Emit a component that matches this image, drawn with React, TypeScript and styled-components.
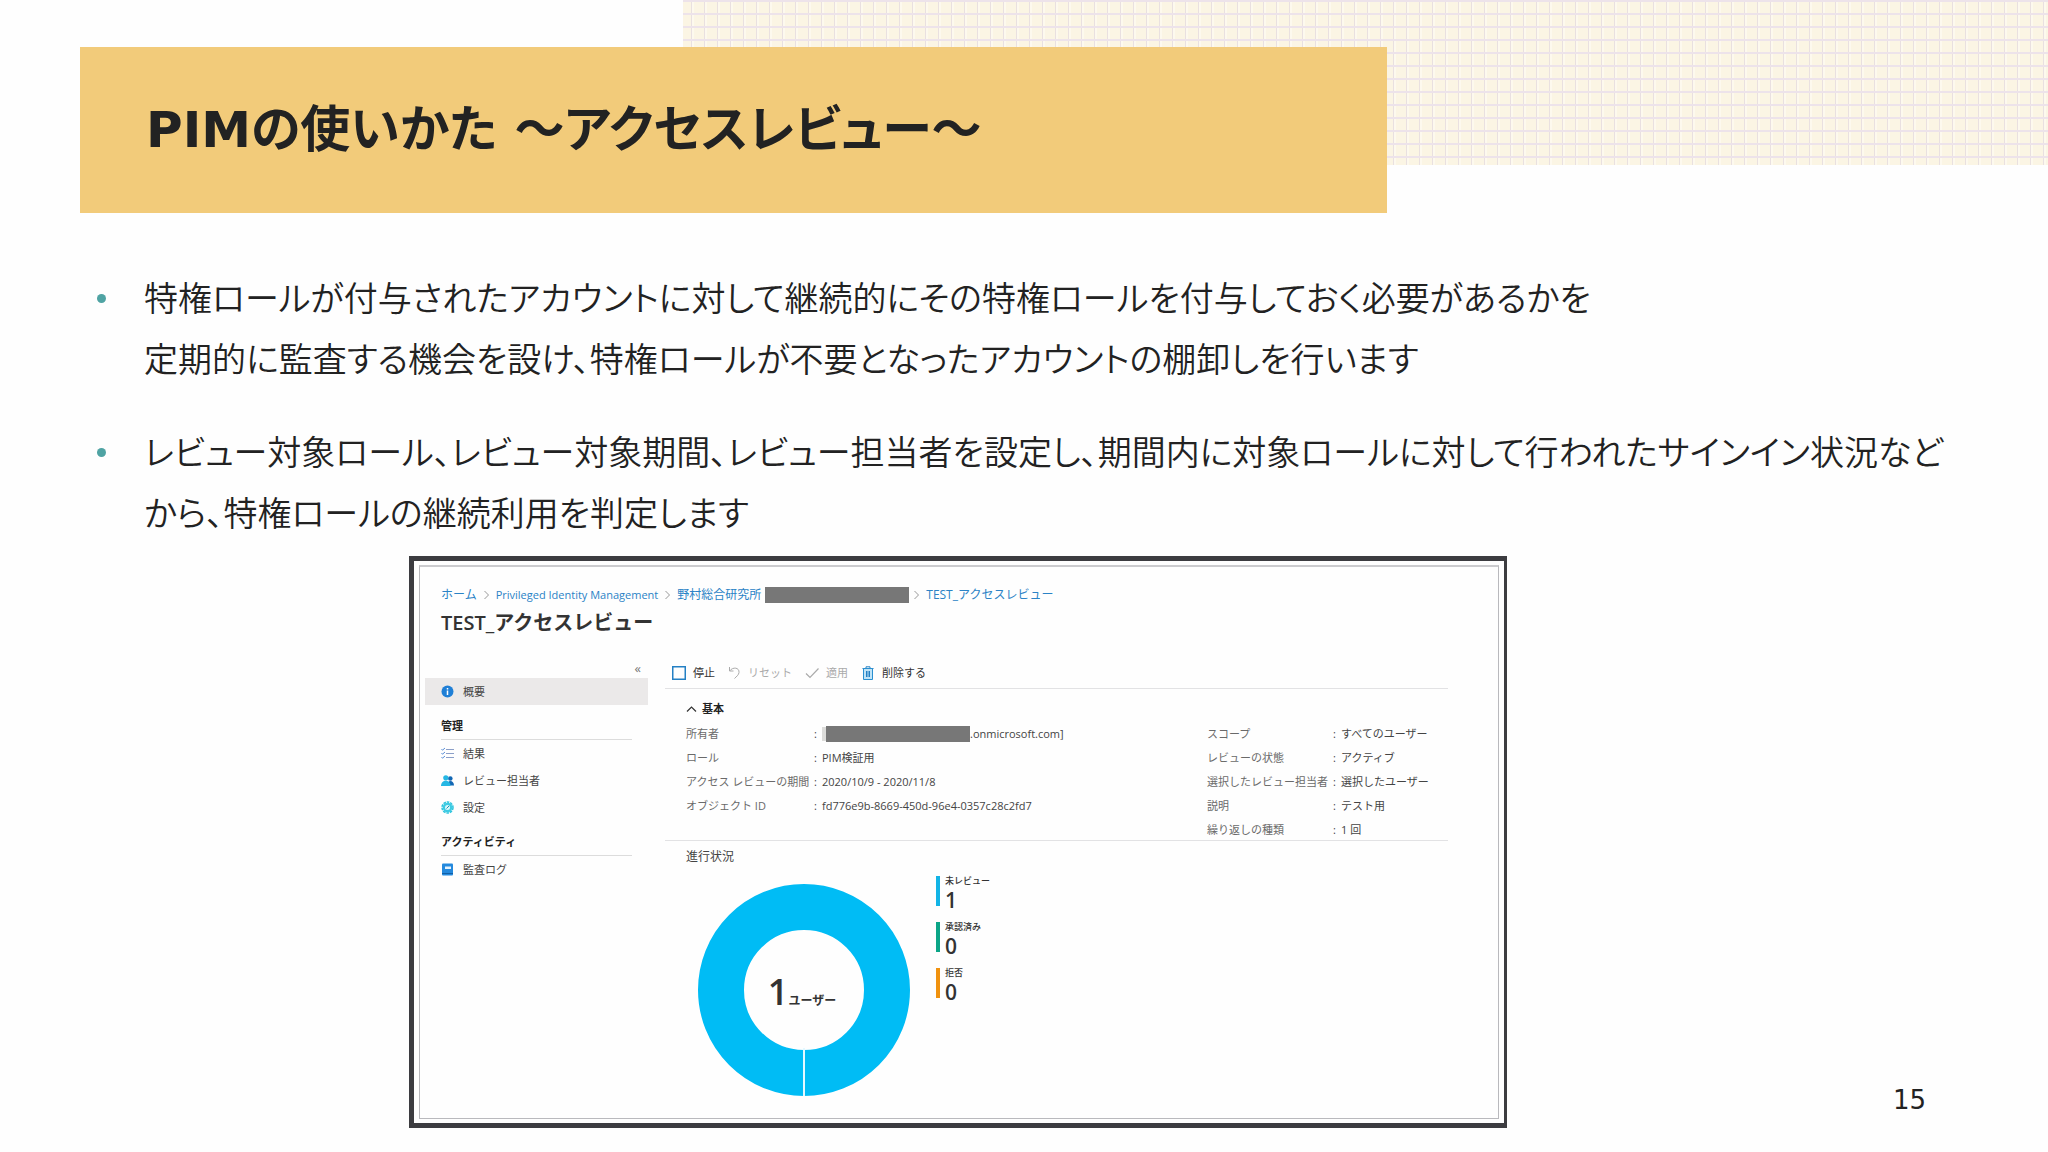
import React from "react";
import styled, { createGlobalStyle } from "styled-components";

const GlobalStyle = createGlobalStyle`
  *, *::before, *::after { box-sizing: border-box; }
  body { margin: 0; background: #fefefe; color: #222; }
  h1, h2, h3, p, ul, ol, dl, dd, figure { margin: 0; padding: 0; }
  ul, ol { list-style: none; }
`;

const slideFont = `"DejaVu Sans", "Noto Sans CJK JP", sans-serif`;
const portalFont = `"Open Sans", "Noto Sans CJK JP", sans-serif`;

const Slide = styled.main`
  min-height: 100vh;
  font-family: ${slideFont};
`;

const Header = styled.header`
  display: grid;
  grid-template-columns: 1fr 2fr;
  align-items: start;
`;

const GridPaper = styled.div`
  grid-area: 1 / 2;
  height: 165px;
  background-color: #fbf5e4;
  background-image:
    linear-gradient(#ede3ea 2px, transparent 2px),
    linear-gradient(90deg, #e9e0e0 1px, #fdf9ee 1px, #fdf9ee 3px, transparent 3px);
  background-size: 13px 13px;
  background-position: 0 0, 8px 0;
`;

const TitleBox = styled.div`
  grid-area: 1 / 1 / 2 / 3;
  width: 1307px;
  max-width: calc(100% - 80px);
  margin: 47px 0 0 80px;
  padding: 51px 66px;
  background: #f2cb7a;
`;

const Title = styled.h1`
  font-size: 50px;
  line-height: 64px;
  font-weight: 700;
  font-feature-settings: "palt";
`;

const Points = styled.ul`
  display: grid;
  gap: 32px;
  padding: 53px 64px 14px 97px;
`;

const Point = styled.li`
  display: flex;
  gap: 38px;
  font-family: "Noto Sans CJK JP", sans-serif;
  font-size: 34px;
  line-height: 61px;
  font-weight: 350;
  font-feature-settings: "palt";

  &::before {
    content: "";
    flex: none;
    width: 9px;
    height: 9px;
    margin-top: 28px;
    border-radius: 50%;
    background: #4fa3a3;
  }
`;

const FigureRow = styled.div`
  display: flex;
  align-items: flex-end;
  justify-content: space-between;
  padding: 0 122px 21px 409px;
`;

const PageNumber = styled.p`
  margin-bottom: 12px;
  font-size: 26px;
  line-height: 32px;
`;

const Frame = styled.figure`
  width: 1098px;
  padding: 4px 5px;
  border: 5px solid #3c3c40;
  border-right-width: 3px;
  font-family: ${portalFont};
`;

const Portal = styled.div`
  padding: 20px 0 22px;
  border: 1px solid #b9b9bd;
  border-top: 2px solid #cbcbce;
  font-size: 11px;
  line-height: 16px;
  color: #444;
`;

const Crumbs = styled.nav`
  display: flex;
  align-items: center;
  gap: 6px;
  padding-left: 21px;
  font-size: 12px;
`;

const Crumb = styled.a<{ $small?: boolean }>`
  color: #2b83c6;
  font-size: ${(p) => (p.$small ? 11 : 12)}px;
  text-decoration: none;
`;

const Separator = styled.svg`
  width: 7px;
  height: 10px;
  fill: none;
  stroke: #999;
`;

const CrumbGroup = styled.span`
  display: flex;
  align-items: center;
  gap: 4px;
`;

const Redacted = styled.span`
  display: inline-block;
  width: 144px;
  height: 16px;
  background: #777;
`;

const Smudge = styled.span`
  width: 4px;
  height: 14px;
  background: #dcdcda;
`;

const PortalTitle = styled.h2`
  padding-left: 21px;
  margin-top: 8px;
  font-size: 20px;
  line-height: 24px;
  font-weight: 600;
  color: #333;
`;

const Columns = styled.div`
  display: grid;
  grid-template-columns: 223px minmax(0, 1fr);
  gap: 17px;
  margin-top: 21px;
  padding: 0 50px 0 5px;
`;

const Side = styled.nav`
  display: flex;
  flex-direction: column;
`;

const Collapse = styled.button`
  align-self: flex-end;
  height: 22px;
  padding: 2px 7px 0;
  border: 0;
  background: none;
  color: #777;
  font: 13px/18px ${portalFont};
`;

const SideHeading = styled.h3`
  margin: 8px 16px 0;
  border-bottom: 1px solid #dcdcdc;
  font-size: 11px;
  line-height: 26px;
  font-weight: 600;
  color: #222;
`;

const SideLink = styled.a<{ $active?: boolean }>`
  display: flex;
  align-items: center;
  gap: 9px;
  height: 27px;
  padding-left: 16px;
  background: ${(p) => (p.$active ? "#ebe9e9" : "none")};
  color: #444;
  text-decoration: none;
`;

const Icon = styled.svg<{ $size?: number }>`
  flex: none;
  width: ${(p) => p.$size ?? 13}px;
  height: ${(p) => p.$size ?? 13}px;
  fill: none;
`;

const Toolbar = styled.div`
  display: flex;
  gap: 13px;
  height: 33px;
  padding: 1px 7px 0;
  border-bottom: 1px solid #e2e2e4;
`;

const Tool = styled.button`
  display: flex;
  align-items: center;
  gap: 7px;
  padding: 0;
  border: 0;
  background: none;
  color: #333;
  font: 11px/16px ${portalFont};

  &:disabled { color: #aaa; }
`;

const SectionToggle = styled.button`
  display: flex;
  align-items: center;
  gap: 5px;
  height: 24px;
  margin: 8px 0 1px;
  padding: 0 21px;
  border: 0;
  background: none;
  color: #222;
  font: 600 11px/16px ${portalFont};
`;

const Essentials = styled.div`
  display: grid;
  grid-template-columns: 521px minmax(0, 1fr);
  align-items: start;
  height: 119px;
  padding-left: 21px;
  border-bottom: 1px solid #e2e2e4;
`;

const Facts = styled.dl<{ $label: number }>`
  display: grid;
  grid-template-columns: ${(p) => p.$label}px minmax(0, 1fr);
  grid-auto-rows: 24px;
  align-items: center;
  white-space: nowrap;

  dt { color: #6a6a6a; }
  dd {
    display: flex;
    align-items: center;
    color: #444;
  }
  dd::before {
    content: ":";
    width: 8px;
  }
`;

const ProgressTitle = styled.h3`
  margin: 8px 0 11px 21px;
  font-size: 12px;
  line-height: 16px;
  font-weight: 400;
  color: #444;
`;

const Progress = styled.div`
  display: flex;
  align-items: flex-start;
  gap: 26px;
  padding-left: 33px;
`;

const Donut = styled.div`
  display: grid;
  place-items: center;
  margin-top: 8px;

  > * { grid-area: 1 / 1; }
`;

const DonutLabel = styled.p`
  display: flex;
  align-items: baseline;
  padding: 12px 4px 0 0;
  font-size: 12px;
  line-height: 40px;
  font-weight: 600;
  color: #333;

  strong {
    font-size: 36px;
    font-weight: 600;
  }
`;

const Legend = styled.ul`
  display: grid;
  gap: 16px;
`;

const LegendItem = styled.li<{ $color: string }>`
  display: grid;
  height: 30px;
  padding-left: 5px;
  border-left: 4px solid ${(p) => p.$color};
  font-size: 9px;
  line-height: 10px;
  font-weight: 500;
  color: #333;

  strong {
    font-size: 21px;
    line-height: 28px;
    font-weight: 600;
  }
`;

const Chevron = () => (
  <Separator viewBox="0 0 7 10" aria-hidden="true">
    <path d="M1.5 1l4 4-4 4" />
  </Separator>
);

const InfoIcon = () => (
  <Icon viewBox="0 0 13 13" aria-hidden="true">
    <circle cx="6.5" cy="6.5" r="6" fill="#1f7fd6" />
    <path d="M6.5 5.5v4.5M6.5 3v1.5" stroke="#fff" strokeWidth="1.5" />
  </Icon>
);

const ListIcon = () => (
  <Icon viewBox="0 0 13 13" aria-hidden="true">
    <path d="M5 2.5h8M5 6.5h8M5 10.5h8" stroke="#8b9fc8" strokeWidth="1.2" />
    <path d="M.5 2l1 1.200L4 1M.5 6l1 1.200L4 5M.5 10l1 1.200L4 9" stroke="#5b8fd8" />
  </Icon>
);

const PeopleIcon = () => (
  <Icon viewBox="0 0 13 13" aria-hidden="true">
    <circle cx="9.300" cy="4.500" r="2.300" fill="#1267b4" />
    <path d="M6 11.500c0-6 7-6 7 0z" fill="#1267b4" />
    <circle cx="4.800" cy="3.800" r="2.600" fill="#25b7e4" />
    <path d="M0 12c0-7 9.500-7 9.500 0z" fill="#25b7e4" />
  </Icon>
);

const GearIcon = () => (
  <Icon viewBox="0 0 13 13" aria-hidden="true">
    <circle cx="6.5" cy="6.5" r="5.500" stroke="#2cc4de" strokeWidth="1.500" strokeDasharray="2.600 .9" />
    <circle cx="6.5" cy="6.5" r="4.800" fill="#3dcbe3" />
    <circle cx="6.5" cy="6.5" r="2.500" fill="#d8f6fa" />
    <path d="M5.500 7.500l2.500-2.500" stroke="#1b93b5" />
  </Icon>
);

const LogIcon = () => (
  <Icon viewBox="0 0 13 13" aria-hidden="true">
    <rect x="1" y=".5" width="11" height="12" rx="1" fill="#2489dd" />
    <path d="M1 10.500h11" stroke="#1260a6" />
    <rect x="4" y="3.500" width="6" height="2.500" fill="#e4f2fc" />
  </Icon>
);

const StopIcon = () => (
  <Icon $size={14} viewBox="0 0 14 14" aria-hidden="true">
    <rect x=".75" y=".75" width="12.500" height="12.500" stroke="#2480c4" strokeWidth="1.500" />
  </Icon>
);

const UndoIcon = () => (
  <Icon viewBox="0 0 13 13" aria-hidden="true">
    <path d="M1.500 1v4h4M1.500 5C5 .5 11.500 1.500 11 6.500c-.3 2.500-2.500 4-4.500 6" stroke="#aaa" />
  </Icon>
);

const CheckIcon = () => (
  <Icon $size={14} viewBox="0 0 14 14" aria-hidden="true">
    <path d="M1 7.500l4 4 8.500-9" stroke="#aaa" strokeWidth="1.200" />
  </Icon>
);

const TrashIcon = () => (
  <Icon $size={14} viewBox="0 0 14 14" aria-hidden="true">
    <path d="M1.500 2.500h11M5 2.500V.8h4v1.700" stroke="#2480c4" />
    <path d="M2.500 2.500h9v11h-9z" fill="#bfe3f7" stroke="#2a8fd0" />
    <path d="M5.500 5v6M7 5v6M8.500 5v6" stroke="#2480c4" />
  </Icon>
);

const CaretUp = () => (
  <Icon $size={11} viewBox="0 0 11 11" aria-hidden="true">
    <path d="M1 7.500l4.500-4.500L10 7.500" stroke="#333" strokeWidth="1.200" />
  </Icon>
);

const scopeFacts = [
  ["スコープ", "すべてのユーザー"],
  ["レビューの状態", "アクティブ"],
  ["選択したレビュー担当者", "選択したユーザー"],
  ["説明", "テスト用"],
  ["繰り返しの種類", "1 回"],
];

const legend = [
  { label: "未レビュー", count: 1, color: "#12b4e6" },
  { label: "承認済み", count: 0, color: "#0ba587" },
  { label: "拒否", count: 0, color: "#f0920f" },
];

export default function App() {
  return (
    <Slide lang="ja">
      <GlobalStyle />
      <Header>
        <GridPaper />
        <TitleBox>
          <Title>PIMの使いかた ～アクセスレビュー～</Title>
        </TitleBox>
      </Header>

      <Points>
        <Point>
          <p>
            特権ロールが付与されたアカウントに対して継続的にその特権ロールを付与しておく必要があるかを
            <br />
            定期的に監査する機会を設け、特権ロールが不要となったアカウントの棚卸しを行います
          </p>
        </Point>
        <Point>
          <p>
            レビュー対象ロール、レビュー対象期間、レビュー担当者を設定し、期間内に対象ロールに対して行われたサインイン状況など
            <br />
            から、特権ロールの継続利用を判定します
          </p>
        </Point>
      </Points>

      <FigureRow>
        <Frame>
          <Portal>
            <Crumbs>
              <Crumb href="#home">ホーム</Crumb>
              <Chevron />
              <Crumb href="#pim" $small>Privileged Identity Management</Crumb>
              <Chevron />
              <CrumbGroup>
                <Crumb href="#tenant">野村総合研究所</Crumb>
                <Redacted />
                <Chevron />
              </CrumbGroup>
              <Crumb href="#review">TEST_アクセスレビュー</Crumb>
            </Crumbs>
            <PortalTitle>TEST_アクセスレビュー</PortalTitle>

            <Columns>
              <Side>
                <Collapse type="button">«</Collapse>
                <SideLink href="#overview" $active><InfoIcon />概要</SideLink>
                <SideHeading>管理</SideHeading>
                <SideLink href="#results"><ListIcon />結果</SideLink>
                <SideLink href="#reviewers"><PeopleIcon />レビュー担当者</SideLink>
                <SideLink href="#settings"><GearIcon />設定</SideLink>
                <SideHeading>アクティビティ</SideHeading>
                <SideLink href="#audit"><LogIcon />監査ログ</SideLink>
              </Side>

              <section>
                <Toolbar>
                  <Tool type="button"><StopIcon />停止</Tool>
                  <Tool type="button" disabled><UndoIcon />リセット</Tool>
                  <Tool type="button" disabled><CheckIcon />適用</Tool>
                  <Tool type="button"><TrashIcon />削除する</Tool>
                </Toolbar>

                <SectionToggle type="button"><CaretUp />基本</SectionToggle>
                <Essentials>
                  <Facts $label={128}>
                    <dt>所有者</dt>
                    <dd><Smudge /><Redacted />.onmicrosoft.com]</dd>
                    <dt>ロール</dt>
                    <dd>PIM検証用</dd>
                    <dt>アクセス レビューの期間</dt>
                    <dd>2020/10/9 - 2020/11/8</dd>
                    <dt>オブジェクト ID</dt>
                    <dd>fd776e9b-8669-450d-96e4-0357c28c2fd7</dd>
                  </Facts>
                  <Facts $label={126}>
                    {scopeFacts.map(([term, value]) => (
                      <React.Fragment key={term}>
                        <dt>{term}</dt>
                        <dd>{value}</dd>
                      </React.Fragment>
                    ))}
                  </Facts>
                </Essentials>

                <ProgressTitle>進行状況</ProgressTitle>
                <Progress>
                  <Donut>
                    <svg width="212" height="212" viewBox="0 0 212 212" aria-hidden="true">
                      <circle cx="106" cy="106" r="83" fill="none" stroke="#00bcf5" strokeWidth="46" />
                      <path d="M106 164v48" stroke="#e4f8ff" strokeWidth="2" />
                    </svg>
                    <DonutLabel><strong>1</strong>ユーザー</DonutLabel>
                  </Donut>
                  <Legend>
                    {legend.map((entry) => (
                      <LegendItem key={entry.label} $color={entry.color}>
                        <span>{entry.label}</span>
                        <strong>{entry.count}</strong>
                      </LegendItem>
                    ))}
                  </Legend>
                </Progress>
              </section>
            </Columns>
          </Portal>
        </Frame>
        <PageNumber>15</PageNumber>
      </FigureRow>
    </Slide>
  );
}
